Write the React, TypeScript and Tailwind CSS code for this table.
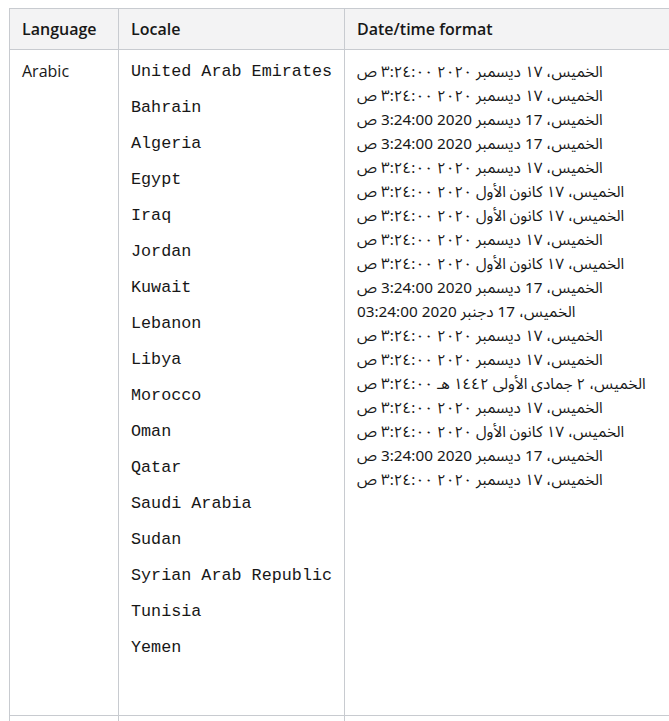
import React from "react";

const locales = [
  "United Arab Emirates",
  "Bahrain",
  "Algeria",
  "Egypt",
  "Iraq",
  "Jordan",
  "Kuwait",
  "Lebanon",
  "Libya",
  "Morocco",
  "Oman",
  "Qatar",
  "Saudi Arabia",
  "Sudan",
  "Syrian Arab Republic",
  "Tunisia",
  "Yemen",
];

const A = "الخميس، ١٧ ديسمبر ٢٠٢٠ ٣:٢٤:٠٠ ص";
const L = "الخميس، 17 ديسمبر 2020 3:24:00 ص";
const K = "الخميس، ١٧ كانون الأول ٢٠٢٠ ٣:٢٤:٠٠ ص";
const M = "الخميس، 17 دجنبر 2020 03:24:00";
const H = "الخميس، ٢ جمادى الأولى ١٤٤٢ هـ ٣:٢٤:٠٠ ص";

const dates = [A, A, L, L, A, K, K, A, K, L, M, A, A, H, A, K, L, A];

const sans = { fontFamily: '"Open Sans", "Noto Sans", sans-serif' };

export default function App() {
  return (
    <div
      className="w-[669px] h-[721px] overflow-hidden bg-white pl-[9px] pt-[8px] text-[#171717]"
      style={sans}
    >
      <div className="w-[760px] border-l border-t border-[#c8cbd0]">
        <div className="grid grid-cols-[109px_226px_1fr] bg-[#f3f3f4] border-b border-[#c8cbd0]">
          <div className="h-[40px] flex items-center px-3 border-r border-[#c8cbd0] font-semibold text-[16px]">
            Language
          </div>
          <div className="h-[40px] flex items-center px-3 border-r border-[#c8cbd0] font-semibold text-[16px]">
            Locale
          </div>
          <div className="h-[40px] flex items-center px-3 border-r border-[#c8cbd0] font-semibold text-[16px]">
            Date/time format
          </div>
        </div>
        <div className="grid grid-cols-[109px_226px_1fr] border-b border-[#c8cbd0]">
          <div className="border-r border-[#c8cbd0] px-3 pt-[9px] text-[16px] leading-[24px]">
            Arabic
          </div>
          <div
            className="border-r border-[#c8cbd0] px-3 pt-[10px] pb-[55px] flex flex-col gap-[12px]"
            style={{ fontFamily: '"Liberation Mono", "Courier New", monospace' }}
          >
            {locales.map((l) => (
              <div key={l} className="text-[16.75px] leading-[24px] whitespace-nowrap">
                {l}
              </div>
            ))}
          </div>
          <div
            className="border-r border-[#c8cbd0] px-3 pt-[10px] text-[15.3px] leading-[24px]"
            style={{ fontFamily: '"Noto Sans Arabic", "DejaVu Sans", "Noto Sans", sans-serif' }}
          >
            {dates.map((d, i) => (
              <div key={i} className="whitespace-nowrap h-[24px]">
                {d}
              </div>
            ))}
          </div>
        </div>
        <div className="grid grid-cols-[109px_226px_1fr] h-[40px]">
          <div className="border-r border-[#c8cbd0]" />
          <div className="border-r border-[#c8cbd0]" />
          <div className="border-r border-[#c8cbd0]" />
        </div>
      </div>
    </div>
  );
}
